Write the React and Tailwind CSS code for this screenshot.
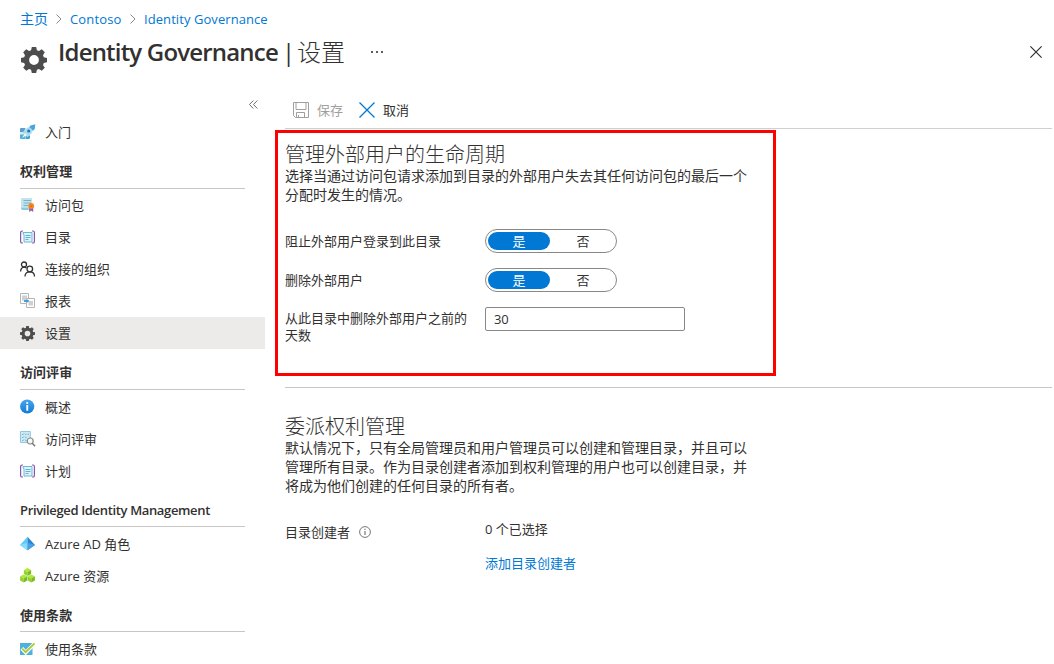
import React from "react";

function Gear({ size, className }) {
  return (
    <svg width={size} height={size} viewBox="0 0 26 26" className={className} fill="#4d4d4d">
      <path
        fillRule="evenodd"
        d="M10.800 0h4.400l.7 3.300 2 .8 2.900-1.800 3 3-1.800 2.900.8 2 3.200.7v4.300l-3.200.7-.8 2 1.800 2.900-3 3-2.900-1.800-2 .8-.7 3.200h-4.400l-.7-3.200-2-.8-2.900 1.800-3-3L4 17.900l-.8-2-3.200-.7v-4.300l3.200-.7.8-2-1.800-2.900 3-3 2.900 1.800 2-.8zM13 8.100a4.900 4.900 0 1 0 0 9.800 4.900 4.900 0 0 0 0-9.800z"
      />
    </svg>
  );
}

const box = { width: 16, height: 16, viewBox: "0 0 16 16", fill: "none" };

const Rocket = () => (
  <svg {...box}>
    <path d="M1 4h4.500L4 8H0V5a1 1 0 0 1 1-1z" fill="#5b9fc6" />
    <path d="M0 8h4v3H0z" fill="#d5ebf4" />
    <path d="M0 10.500h5V15H1a1 1 0 0 1-1-1z" fill="#4fb0d8" />
    <path d="M5.500 11.500H10V14l-1 1H5.500z" fill="#3f9fd0" />
    <path d="M2.500 8.500L6 4.800l5-3L14 5l-3 4.800-3.500 3.400z" fill="#a9daee" />
    <path d="M10.500 1.500L15.300.200 14.800 5l-1.800 1.500L9.500 3z" fill="#46a8d6" />
    <circle cx="8.700" cy="7" r="1.500" fill="#1274b8" />
    <path d="M2 14l3-5 2 2z" fill="#eef8fc" />
  </svg>
);

const PackageIcon = () => (
  <svg {...box}>
    <path d="M2 1h10v12H3a2 2 0 0 1-2-2V2a1 1 0 0 1 1-1z" fill="#c3e3ed" />
    <path d="M3.500 3.500H11M3.500 6H11M3.500 8.500h5" stroke="#74b4cc" />
    <path d="M1 10.800h7.500V13H3a2 2 0 0 1-2-2z" fill="#8fc8dc" />
    <path d="M9.200 10h4v5l-2-1.500-2 1.500z" fill="#8a5bb5" />
    <circle cx="11.200" cy="9" r="2.900" fill="#f5871f" />
    <circle cx="11.200" cy="9" r="1.200" fill="#ea7212" />
  </svg>
);

const CatalogIcon = () => (
  <svg {...box}>
    <path d="M3 2H2.200A1.600 1.600 0 0 0 .6 3.600v8.800A1.600 1.600 0 0 0 2.200 14H3M12 2h.8a1.600 1.600 0 0 1 1.600 1.600v8.800a1.600 1.600 0 0 1-1.600 1.600H12" stroke="#8557b0" strokeWidth="1.200" />
    <path d="M3 3.500h9v9.500H4V5.500L3 5z" fill="#dff2f8" stroke="#5db1cf" strokeWidth=".9" />
    <path d="M5.500 6.500h5M5.500 8.500h5M5.500 10.500h3" stroke="#62b5d2" />
  </svg>
);

const PeopleIcon = () => (
  <svg {...box} stroke="#323130" strokeWidth="1.300">
    <circle cx="4" cy="3.500" r="2.500" />
    <path d="M.6 10.500C.6 8 2 6.100 4.200 6.100c1 0 1.600.4 2.200 1" />
    <circle cx="9.800" cy="8" r="2.800" />
    <path d="M5 15.500c0-3 2-4.700 4.800-4.700s4.700 1.700 4.700 4.700" />
  </svg>
);

const ReportIcon = () => (
  <svg {...box}>
    <path d="M.5.500h8v10h-8z" fill="#fff" stroke="#b5b5b5" />
    <path d="M2 2.500h5v5H2z" fill="#d0d0d0" />
    <path d="M6.500 5.500h8v9h-8z" fill="#fff" stroke="#b5b5b5" />
    <path d="M8.500 8h4.500v4.500H8.500z" fill="#d0d0d0" />
    <path d="M4 8h4" stroke="#2e9be0" strokeWidth="1.800" />
    <path d="M7.200 6.200L9.300 8 7.200 9.800z" fill="#2e9be0" />
  </svg>
);

const InfoBlue = () => (
  <svg {...box}>
    <defs>
      <linearGradient id="infoFill" x1="0" y1="0" x2="0" y2="1">
        <stop offset="0" stopColor="#4aa5ee" />
        <stop offset="1" stopColor="#0f7ad6" />
      </linearGradient>
    </defs>
    <circle cx="7.200" cy="7.500" r="7.100" fill="url(#infoFill)" />
    <circle cx="7.200" cy="4" r="1.100" fill="#fff" />
    <path d="M6.300 6h1.900v5.700H6.300z" fill="#fff" />
  </svg>
);

const ReviewIcon = () => (
  <svg {...box}>
    <path d="M.5.500h9.800v11H.5z" fill="#cfeaf3" stroke="#8cc9de" />
    <path d="M2 3l.8.8L4 2.400M2 6l.8.800L4 5.400M2 9l.8.800L4 8.400M5 3.300h1.500M5 6.300h1.500M7.500 3.300H9M5 9.300h1.500" stroke="#5fb2cf" strokeWidth=".9" />
    <circle cx="10.200" cy="10" r="3" fill="#f4fafc" stroke="#8a8a8a" strokeWidth="1.200" />
    <path d="M12.300 12.300l2.700 3" stroke="#777" strokeWidth="1.500" />
  </svg>
);

const AadIcon = () => (
  <svg {...box}>
    <path d="M7.500.8L0 9l7.500 5.200z" fill="#5fcaf5" />
    <path d="M7.500.8L15 9l-7.500 5.200z" fill="#2b86d2" />
    <path d="M0 9l7.500-2.200v7.400z" fill="#84dcfa" />
    <path d="M15 9L7.500 6.800v7.400z" fill="#4aa0e4" />
  </svg>
);

const Cube = ({ x, y }) => (
  <g transform={`translate(${x} ${y})`}>
    <path d="M3.700 0l3.600 1.900-3.600 2.100L.1 1.900z" fill="#b3e63c" />
    <path d="M.1 1.900L3.700 4v4L.1 6z" fill="#92d32a" />
    <path d="M7.300 1.900L3.700 4v4l3.600-2z" fill="#78bb20" />
  </g>
);

const ResourceIcon = () => (
  <svg {...box}>
    <Cube x={3.8} y={0} />
    <Cube x={0} y={6.4} />
    <Cube x={7.6} y={6.4} />
  </svg>
);

const TermsIcon = () => (
  <svg {...box}>
    <path d="M0 2h12.500v12H0z" fill="#50b0dc" />
    <path d="M1.800 7.400l3.900 4.200L14.300 2.800" stroke="#fff" strokeWidth="3.800" />
    <path d="M2.300 7.600l3.300 3.500L14.500 2.400" stroke="#a9cc30" strokeWidth="1.800" />
  </svg>
);

const SaveIcon = () => (
  <svg width="16" height="16" viewBox="0 0 16 16" fill="none" stroke="#a19f9d">
    <path d="M.5.500h15v15H2.500l-2-2z" />
    <path d="M3 .500v7h10V.500M3.500 15.500v-5h8v5M5.500 13v2.500" />
  </svg>
);

const groups = [
  {
    title: "权利管理",
    heading: "h-[41px] pt-[6px] tracking-[0.05px]",
    list: "",
    items: [
      ["访问包", PackageIcon],
      ["目录", CatalogIcon],
      ["连接的组织", PeopleIcon],
      ["报表", ReportIcon],
      ["设置", () => <Gear size={15} />, true],
    ],
  },
  {
    title: "访问评审",
    heading: "h-[41px] pt-[6px] tracking-[0.05px]",
    list: "mt-px",
    items: [
      ["概述", InfoBlue],
      ["访问评审", ReviewIcon],
      ["计划", CatalogIcon],
    ],
  },
  {
    title: "Privileged Identity Management",
    heading: "h-10 pt-[6px] tracking-[-0.35px]",
    list: "mt-px",
    items: [
      ["Azure AD 角色", AadIcon],
      ["Azure 资源", ResourceIcon],
    ],
  },
  {
    title: "使用条款",
    heading: "h-10 pt-[6px] tracking-[0.05px]",
    list: "mt-px",
    items: [["使用条款", TermsIcon]],
  },
];

function NavItem({ label, Icon, active }) {
  return (
    <li className={active ? "flex h-8 items-center bg-[#edebe9] pl-5" : "flex h-8 items-center pl-5"}>
      <span className="flex w-[25px] shrink-0">
        <Icon />
      </span>
      <span>{label}</span>
    </li>
  );
}

function Toggle() {
  return (
    <div className="flex h-6 w-[132px] items-center rounded-full border border-[#8a8886] p-0.5">
      <span className="flex h-[18px] w-[62px] shrink-0 items-center justify-center rounded-full bg-[#0078d4] pb-px text-white">是</span>
      <span className="flex w-[66px] shrink-0 justify-center pb-px">否</span>
    </div>
  );
}

const Crumb = () => (
  <svg width="6" height="10" viewBox="0 0 6 10" fill="none" stroke="#8a8886">
    <path d="M.5.500L5 5 .5 9.500" />
  </svg>
);

export default function App() {
  return (
    <div className="h-[664px] w-[1054px] overflow-hidden bg-white font-['Open_Sans','Noto_Sans_CJK_SC',sans-serif] text-[13px] leading-[18px] text-[#323130]">
      <nav className="flex h-[38px] items-center pl-5 text-[#0078d4]">
        <span className="w-[28px] text-[14px]">主页</span>
        <span className="flex w-[22px] justify-center"><Crumb /></span>
        <span className="w-[52px] whitespace-nowrap tracking-[0.15px]">Contoso</span>
        <span className="flex w-[22px] justify-center"><Crumb /></span>
        <span className="whitespace-nowrap tracking-[0.07px]">Identity Governance</span>
      </nav>
      <header className="flex h-[46px] items-start pl-[21px]">
        <Gear size={26} className="mt-[9px]" />
        <h1 className="ml-[11px] flex w-[287px] whitespace-nowrap text-[24px] leading-[28px]">
          <span className="w-[223px] font-semibold tracking-[-0.81px]">Identity Governance</span>
          <span className="w-[17px] pl-0.5">|</span>
          <span className="font-light">设置</span>
        </h1>
        <svg width="12" height="2" viewBox="0 0 12 2" fill="#605e5c" className="ml-[26px] mt-[13px]">
          <path d="M0 0h2v2H0zM5 0h2v2H5zM10 0h2v2h-2z" />
        </svg>
        <svg width="12" height="12" viewBox="0 0 12 12" fill="none" stroke="#323130" strokeWidth="1.200" className="ml-auto mr-3 mt-2">
          <path d="M.4.400l11.200 11.200M11.600.400L.4 11.600" />
        </svg>
      </header>

      <div className="flex">
        <aside className="w-[265px] shrink-0">
          <div className="flex h-8 justify-end pr-[7px] pt-[16px]">
            <svg width="9" height="9" viewBox="0 0 9 9" fill="none" stroke="#605e5c" strokeWidth=".9">
              <path d="M4.300.500l-3.800 4 3.800 4M8.300.500l-3.800 4 3.800 4" />
            </svg>
          </div>
          <ul>
            <NavItem label="入门" Icon={Rocket} />
          </ul>
          {groups.map((g) => (
            <section key={g.title}>
              <h2 className={`ml-5 flex w-[225px] items-center whitespace-nowrap border-b border-[#c8c6c4] font-semibold ${g.heading}`}>
                {g.title}
              </h2>
              <ul className={g.list}>
                {g.items.map(([label, Icon, active]) => (
                  <NavItem key={label} label={label} Icon={Icon} active={active} />
                ))}
              </ul>
            </section>
          ))}
        </aside>

        <main className="w-[789px]">
          <div className="ml-5 mr-0.5 flex h-[45px] items-center border-b border-[#d2d0ce] pl-2 pt-2">
            <SaveIcon />
            <span className="ml-2 w-[42px] text-[#a19f9d]">保存</span>
            <svg width="16" height="16" viewBox="0 0 16 16" fill="none" stroke="#0078d4" strokeWidth="1.300">
              <path d="M.5.500l15 15M15.500.500l-15 15" />
            </svg>
            <span className="ml-2">取消</span>
          </div>

          <section className="ml-2.5 mt-px h-[246px] w-[501px] border-[3px] border-[#ff0000] pl-[7px] pt-[10px]">
            <h3 className="text-[20px] font-light leading-[24px]">管理外部用户的生命周期</h3>
            <p className="-mt-px w-[466px] text-[14px] leading-[19px]">选择当通过访问包请求添加到目录的外部用户失去其任何访问包的最后一个分配时发生的情况。</p>
            <div className="mt-[25px] grid grid-cols-[200px_200px] gap-y-[15px]">
              <span className="flex items-center">阻止外部用户登录到此目录</span>
              <Toggle />
              <span className="flex items-center pb-px">删除外部用户</span>
              <Toggle />
              <span className="w-[186px] pt-[3px] leading-[17px]">从此目录中删除外部用户之前的天数</span>
              <span className="flex h-6 items-center rounded-[2px] border border-[#8a8886] pl-2 tracking-[-0.3px]">30</span>
            </div>
          </section>

          <section className="ml-5 mr-0.5 mt-[11px] border-t border-[#c8c6c4] pt-[27px]">
            <h3 className="text-[20px] font-light leading-[24px]">委派权利管理</h3>
            <p className="-mt-px w-[466px] text-[14px] leading-[19px]">默认情况下，只有全局管理员和用户管理员可以创建和管理目录，并且可以管理所有目录。作为目录创建者添加到权利管理的用户也可以创建目录，并将成为他们创建的任何目录的所有者。</p>
            <div className="mt-[25px] grid grid-cols-[200px_200px]">
              <span className="flex h-6 items-center">
                目录创建者
                <svg width="12" height="12" viewBox="0 0 12 12" fill="none" stroke="#797775" className="ml-[9px]">
                  <circle cx="6" cy="6" r="5.400" />
                  <path d="M6 5v4M6 2.800v1.200" strokeWidth="1.200" />
                </svg>
              </span>
              <span className="flex h-[18px] items-center">0 个已选择</span>
              <a className="col-start-2 mt-[10px] text-[#0078d4]">添加目录创建者</a>
            </div>
          </section>
        </main>
      </div>
    </div>
  );
}
